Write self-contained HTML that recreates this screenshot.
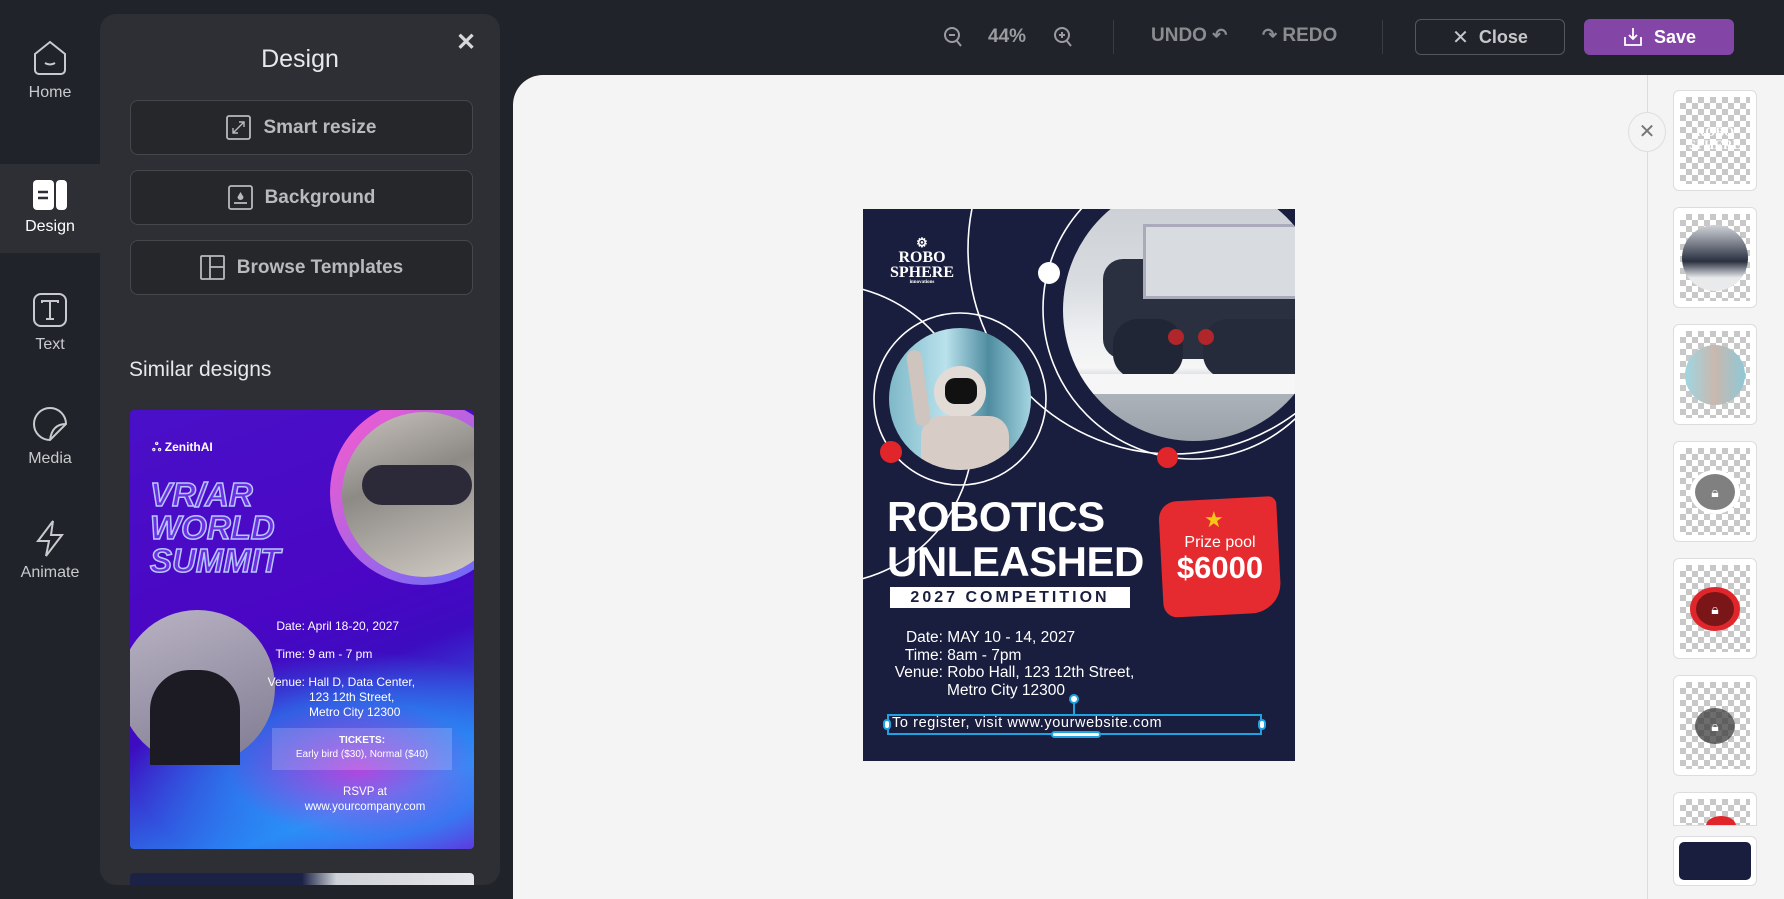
<!DOCTYPE html>
<html><head><meta charset="utf-8"><style>
*{box-sizing:border-box;margin:0;padding:0}
body{width:1784px;height:899px;overflow:hidden;background:#202329;font-family:"Liberation Sans",sans-serif;position:relative}
.abs{position:absolute}
.rail-item{position:absolute;left:0;width:100px;text-align:center;color:#c9cacd;font-size:16px}
.rail-item svg{display:block;margin:0 auto 6px}
.panel{left:100px;top:14px;width:400px;height:871px;background:#2d2f34;border-radius:16px}
.btn{position:absolute;left:30px;width:343px;height:55px;border:1.5px solid #45474d;border-radius:8px;background:#25272b;color:#b9babd;font-weight:bold;font-size:19px;display:flex;align-items:center;justify-content:center;gap:12px}
.thumb{position:absolute;left:1673px;width:84px;height:101px;border-radius:6px;background:#fff;border:1px solid #ddd;padding:6px}
.chk{width:100%;height:100%;background-color:#fff;background-image:linear-gradient(45deg,#c8c8c8 25%,transparent 25%,transparent 75%,#c8c8c8 75%),linear-gradient(45deg,#c8c8c8 25%,transparent 25%,transparent 75%,#c8c8c8 75%);background-size:12px 12px;background-position:0 0,6px 6px;position:relative;overflow:hidden}
.lock{position:absolute;left:50%;top:50%;transform:translate(-50%,-50%);border-radius:50%;display:flex;align-items:center;justify-content:center}
.pt{color:#fff;font-weight:bold;position:absolute}
</style></head><body>

<svg class="abs" style="left:941px;top:25px" width="24" height="24" viewBox="0 0 24 24" fill="none" stroke="#9a9ca0" stroke-width="2"><circle cx="11" cy="10" r="7"/><path d="M8 10h6M16 16l4 5"/></svg>
<div class="abs" style="left:988px;top:26px;color:#9a9ca0;font-weight:bold;font-size:19px">44%</div>
<svg class="abs" style="left:1051px;top:25px" width="24" height="24" viewBox="0 0 24 24" fill="none" stroke="#9a9ca0" stroke-width="2"><circle cx="11" cy="10" r="7"/><path d="M8 10h6M11 7v6M16 16l4 5"/></svg>
<div class="abs" style="left:1113px;top:20px;width:1px;height:34px;background:#3a3c42"></div>
<div class="abs" style="left:1151px;top:25px;color:#8a8c90;font-weight:bold;font-size:19px">UNDO <span style="font-size:18px">↶</span></div>
<div class="abs" style="left:1262px;top:25px;color:#8a8c90;font-weight:bold;font-size:19px"><span style="font-size:18px">↷</span> REDO</div>
<div class="abs" style="left:1382px;top:20px;width:1px;height:34px;background:#3a3c42"></div>
<div class="abs" style="left:1415px;top:19px;width:150px;height:36px;border:1.5px solid #55575c;border-radius:6px;color:#c6c7ca;font-weight:bold;font-size:18px;display:flex;align-items:center;justify-content:center;gap:10px"><span style="font-weight:normal;font-size:20px">✕</span>Close</div>
<div class="abs" style="left:1584px;top:19px;width:150px;height:36px;background:#8446a6;border-radius:6px;color:#fff;font-weight:bold;font-size:18px;display:flex;align-items:center;justify-content:center;gap:10px"><svg width="22" height="22" viewBox="0 0 22 22" fill="none" stroke="#fff" stroke-width="1.8"><path d="M11 2v11M7 9l4 4 4-4M3 11v8h16v-8"/></svg>Save</div>

<div class="abs" style="left:0;top:0;width:100px;height:899px;background:#202329"></div>
<div class="abs" style="left:0;top:164px;width:100px;height:89px;background:#2d2f34"></div>
<div class="rail-item" style="top:38px"><svg width="40" height="40" viewBox="0 0 40 40" fill="none" stroke="#c9cacd" stroke-width="2"><path d="M5 16L20 4l15 12v16a4 4 0 0 1-4 4H9a4 4 0 0 1-4-4z"/><path d="M15 25q5 3 10 0"/></svg>Home</div>
<div class="rail-item" style="top:178px;color:#fff"><svg width="36" height="34" viewBox="0 0 36 34"><rect x="1" y="2" width="21" height="30" rx="4" fill="#fff"/><rect x="24" y="2" width="11" height="30" rx="4" fill="#fff"/><path d="M6 14h10M6 20h10" stroke="#2d2f34" stroke-width="2.5"/></svg>Design</div>
<div class="rail-item" style="top:290px"><svg width="40" height="40" viewBox="0 0 40 40" fill="none" stroke="#c9cacd" stroke-width="2"><rect x="4" y="4" width="32" height="32" rx="7"/><path d="M12 13V11h16v2M20 11v18M16 29h8"/></svg>Text</div>
<div class="rail-item" style="top:404px"><svg width="40" height="40" viewBox="0 0 40 40" fill="none" stroke="#c9cacd" stroke-width="2"><path d="M36 20A16 16 0 1 0 20 36L36 20z"/><path d="M36 20q-14 0-16 16"/></svg>Media</div>
<div class="rail-item" style="top:518px"><svg width="40" height="40" viewBox="0 0 40 40" fill="none" stroke="#c9cacd" stroke-width="2"><path d="M23 3L8 23h11l-3 15 16-21H21z"/></svg>Animate</div>

<div class="abs panel">
  <div class="abs" style="left:0;width:400px;top:31px;text-align:center;color:#e8e8ea;font-size:25px">Design</div>
  <div class="abs" style="left:356px;top:14px;color:#d8d8da;font-size:24px;font-weight:bold">✕</div>
  <div class="btn" style="top:86px"><svg width="25" height="25" viewBox="0 0 25 25" fill="none" stroke="#b9babd" stroke-width="1.8"><rect x="1" y="1" width="23" height="23" rx="2"/><path d="M7 18l11-11M7 13v5h5M18 12V7h-5" stroke-width="1.4"/></svg>Smart resize</div>
  <div class="btn" style="top:156px"><svg width="25" height="25" viewBox="0 0 25 25" fill="none" stroke="#b9babd" stroke-width="1.8"><rect x="1" y="1" width="23" height="23" rx="2"/><path d="M6 18h13"/><path d="M12.5 7l-3 5a3 3 0 0 0 6 0z" fill="#b9babd" stroke="none"/></svg>Background</div>
  <div class="btn" style="top:226px"><svg width="25" height="25" viewBox="0 0 25 25" fill="none" stroke="#b9babd" stroke-width="1.8"><rect x="1" y="1" width="23" height="23" rx="1"/><path d="M10 1v23M10 12h14"/></svg>Browse Templates</div>
  <div class="abs" style="left:29px;top:344px;color:#e8e8ea;font-size:21px">Similar designs</div>
  <div class="abs" style="left:30px;top:396px;width:344px;height:439px;border-radius:4px;overflow:hidden;background:linear-gradient(160deg,#4a10c8 0%,#4a06c4 45%,#3d0cc0 60%,#2a7ff0 85%,#6a20d8 100%)">
    <div class="abs" style="left:0;top:240px;width:380px;height:200px;background:radial-gradient(ellipse at 60% 60%,rgba(230,60,220,.7),rgba(40,160,255,.5) 40%,transparent 70%)"></div>
    <div class="abs" style="left:200px;top:-10px;width:185px;height:185px;border-radius:50%;background:linear-gradient(135deg,#ff5acb,#5a6cff);"></div>
    <div class="abs" style="left:212px;top:2px;width:165px;height:165px;border-radius:50%;background:linear-gradient(160deg,#c9c3bd,#8d8a86 40%,#d6d0c8)"></div>
    <div class="abs" style="left:232px;top:55px;width:110px;height:40px;border-radius:20px;background:#2c2a38"></div>
    <div class="abs" style="left:-10px;top:200px;width:155px;height:155px;border-radius:50%;background:linear-gradient(160deg,#b9b3c4,#7f7a90)"></div>
    <div class="abs" style="left:20px;top:260px;width:90px;height:95px;background:#1c1a22;border-radius:40px 40px 0 0"></div>
    <div class="abs" style="left:22px;top:30px;color:#fff;font-size:12px;font-weight:bold">ஃ ZenithAI</div>
    <div class="abs" style="left:20px;top:68px;color:#6a2fe0;font-size:33px;font-weight:bold;font-style:italic;line-height:33px;-webkit-text-stroke:1.5px #b8c8ff">VR/AR<br>WORLD<br>SUMMIT</div>
    <div class="abs" style="left:125px;top:209px;width:200px;color:#fff;font-size:12px;line-height:15px">
      <div style="margin-bottom:13px"><span style="display:inline-block;width:50px;text-align:right">Date:</span> April 18-20, 2027</div>
      <div style="margin-bottom:13px"><span style="display:inline-block;width:50px;text-align:right">Time:</span> 9 am - 7 pm</div>
      <div><span style="display:inline-block;width:50px;text-align:right">Venue:</span> Hall D, Data Center,</div>
      <div style="padding-left:54px">123 12th Street,<br>Metro City 12300</div>
    </div>
    <div class="abs" style="left:142px;top:318px;width:180px;height:42px;background:rgba(255,255,255,.18);color:#fff;font-size:10px;text-align:center;padding-top:6px;line-height:14px"><b>TICKETS:</b><br>Early bird ($30), Normal ($40)</div>
    <div class="abs" style="left:135px;top:375px;width:200px;color:#fff;font-size:11.5px;text-align:center;line-height:15px">RSVP at<br>www.yourcompany.com</div>
  </div>
  <div class="abs" style="left:30px;top:859px;width:344px;height:12px;border-radius:4px 4px 0 0;background:linear-gradient(90deg,#1b2245 50%,#cfd2d8 60%,#e5e6ea)"></div>
</div>

<div class="abs" style="left:513px;top:75px;width:1134px;height:824px;background:#f4f4f4;border-radius:30px 0 0 0"></div>
<div class="abs" style="left:1647px;top:75px;width:137px;height:824px;background:#f4f4f4;border-left:1px solid #dcdcdc"></div>
<div class="abs" style="left:1628px;top:112px;width:38px;height:40px;border-radius:50%;background:#f4f4f4;border:1px solid #dedede;color:#777;font-size:20px;text-align:center;line-height:38px">✕</div>

<!-- poster -->
<div class="abs" style="left:863px;top:209px;width:432px;height:552px;background:#1a1e3e;overflow:hidden">
  <svg class="abs" style="left:0;top:0" width="432" height="552" viewBox="0 0 432 552" fill="none" stroke="#fff" stroke-width="1.6">
    <circle cx="330" cy="100" r="150"/>
    <circle cx="310" cy="40" r="205"/>
    <circle cx="97" cy="190" r="86"/>
    <circle cx="-40" cy="225" r="150"/>
  </svg>
  <div class="abs" style="left:200px;top:-30px;width:262px;height:262px;border-radius:50%;background:linear-gradient(180deg,#c8ccd2 0%,#d9dce0 40%,#eef0f2 60%,#f6f6f6 72%,#aeb4bb 80%,#9aa1a8 100%);overflow:hidden">
    <div class="abs" style="left:40px;top:80px;width:230px;height:100px;background:#2a3040;border-radius:20px"></div>
    <div class="abs" style="left:50px;top:140px;width:70px;height:60px;background:#202636;border-radius:25px"></div>
    <div class="abs" style="left:140px;top:140px;width:120px;height:60px;background:#252b3a;border-radius:25px"></div>
    <div class="abs" style="left:80px;top:45px;width:160px;height:75px;background:#d8dbe0;border:3px solid #aab"></div>
    <div class="abs" style="left:105px;top:150px;width:16px;height:16px;border-radius:50%;background:#b0262a"></div>
    <div class="abs" style="left:135px;top:150px;width:16px;height:16px;border-radius:50%;background:#b0262a"></div>
    <div class="abs" style="left:0;top:195px;width:262px;height:20px;background:#f6f6f6"></div>
  </div>
  <div class="abs" style="left:26px;top:119px;width:142px;height:142px;border-radius:50%;background:linear-gradient(90deg,#7fb8c8,#b9e2ec 40%,#4f8ca0 70%,#a4d4e0);overflow:hidden">
    <div class="abs" style="left:45px;top:38px;width:52px;height:52px;border-radius:50%;background:#e3dbd6"></div>
    <div class="abs" style="left:56px;top:50px;width:32px;height:26px;border-radius:10px;background:#111"></div>
    <div class="abs" style="left:32px;top:88px;width:88px;height:60px;border-radius:20px 20px 0 0;background:#d8ccc6"></div>
    <div class="abs" style="left:22px;top:22px;width:15px;height:76px;border-radius:7px;background:#cfc4be;transform:rotate(-8deg)"></div>
  </div>
  <div class="abs" style="left:17px;top:232px;width:22px;height:22px;border-radius:50%;background:#e0262a"></div>
  <div class="abs" style="left:294px;top:238px;width:21px;height:21px;border-radius:50%;background:#e0262a"></div>
  <div class="abs" style="left:175px;top:53px;width:22px;height:22px;border-radius:50%;background:#fff"></div>
  <div class="abs" style="left:14px;top:26px;width:90px;text-align:center;color:#fff;font-family:'Liberation Serif',serif;font-weight:bold;font-size:16px;line-height:15px"><div style="font-size:13px">⚙</div>ROBO<br>SPHERE<div style="font-size:5px;line-height:6px">innovations</div></div>
  <div class="pt" style="left:24px;top:285px;font-size:42px;line-height:45px;letter-spacing:-0.5px">ROBOTICS<br>UNLEASHED</div>
  <div class="abs" style="left:27px;top:378px;width:240px;height:21px;background:#fff;color:#1a1e3e;font-weight:bold;font-size:16px;letter-spacing:3px;text-align:center;line-height:21px">2027 COMPETITION</div>
  <div class="abs" style="left:298px;top:290px;width:118px;height:116px;background:#e52b2f;border-radius:18px 8px 30px 14px;transform:rotate(-3deg)"></div>
  <div class="abs" style="left:298px;top:325px;width:118px;text-align:center;color:#fff;font-size:16px;line-height:18px">Prize pool<div style="font-weight:bold;font-size:31px;line-height:32px">$6000</div></div>
  <div class="abs" style="left:341px;top:298px;color:#f5c518;font-size:22px">★</div>
  <div class="abs" style="left:0;top:420px;color:#fff;font-size:15.5px;line-height:17.5px">
    <div><span style="display:inline-block;width:80px;text-align:right">Date:</span> MAY 10 - 14, 2027</div>
    <div><span style="display:inline-block;width:80px;text-align:right">Time:</span> 8am - 7pm</div>
    <div><span style="display:inline-block;width:80px;text-align:right">Venue:</span> Robo Hall, 123 12th Street,</div>
    <div style="padding-left:84px">Metro City 12300</div>
  </div>
  <div class="abs" style="left:24px;top:505px;width:375px;height:21px;border:2px solid #1fa3e0"></div>
  <div class="abs" style="left:210px;top:489px;width:2px;height:16px;background:#1fa3e0"></div>
  <div class="abs" style="left:206px;top:485px;width:10px;height:10px;border-radius:50%;background:#fff;border:2px solid #1fa3e0"></div>
  <div class="abs" style="left:20px;top:510px;width:8px;height:11px;border-radius:4px;background:#fff;border:2px solid #1fa3e0"></div>
  <div class="abs" style="left:395px;top:510px;width:8px;height:11px;border-radius:4px;background:#fff;border:2px solid #1fa3e0"></div>
  <div class="abs" style="left:188px;top:522px;width:50px;height:7px;border-radius:4px;background:#fff;border:2px solid #1fa3e0"></div>
  <div class="abs" style="left:29px;top:506px;color:#fff;font-size:14.5px;letter-spacing:.6px">To register, visit www.yourwebsite.com</div>
</div>

<div class="thumb" style="top:90px"><div class="chk"><div class="abs" style="left:0;width:100%;top:28px;text-align:center;color:#fff;font-family:'Liberation Serif',serif;font-weight:bold;font-size:13px;line-height:13px">ROBO<br>SPHERE</div></div></div>
<div class="thumb" style="top:207px"><div class="chk"><div class="lock" style="width:66px;height:66px;background:linear-gradient(180deg,#cfd3d8,#2a3040 55%,#e8eaec 80%)"></div></div></div>
<div class="thumb" style="top:324px"><div class="chk"><div class="lock" style="width:60px;height:60px;background:linear-gradient(90deg,#9fd6e2,#c9b8ae 50%,#8fc8d6)"></div></div></div>
<div class="thumb" style="top:441px"><div class="chk"><div class="lock" style="width:50px;height:44px;background:#fff"><div style="width:40px;height:36px;border-radius:50%;background:#808080;color:#fff;font-size:14px;text-align:center;line-height:36px">🔒︎</div></div></div></div>
<div class="thumb" style="top:558px"><div class="chk"><div class="lock" style="width:50px;height:44px;background:#e0262a"><div style="width:38px;height:34px;border-radius:50%;background:#7a1518;color:#fff;font-size:14px;text-align:center;line-height:34px">🔒︎</div></div></div></div>
<div class="thumb" style="top:675px"><div class="chk"><div class="lock" style="width:40px;height:36px;background:rgba(60,60,60,.75);color:#fff;font-size:14px;line-height:36px;text-align:center">🔒︎</div></div></div>
<div class="abs" style="left:1673px;top:792px;width:84px;height:34px;overflow:hidden;border-radius:6px 6px 0 0;background:#fff;border:1px solid #ddd;padding:6px 6px 0"><div class="chk" style="height:40px"><div class="abs" style="left:26px;top:17px;width:30px;height:20px;border-radius:50%;background:#e0262a"></div></div></div>
<div class="abs" style="left:1673px;top:836px;width:84px;height:50px;border-radius:6px;background:#fff;border:1px solid #ddd;padding:5px"><div style="width:100%;height:100%;background:#1a1e3e;border-radius:5px"></div></div>
</body></html>
